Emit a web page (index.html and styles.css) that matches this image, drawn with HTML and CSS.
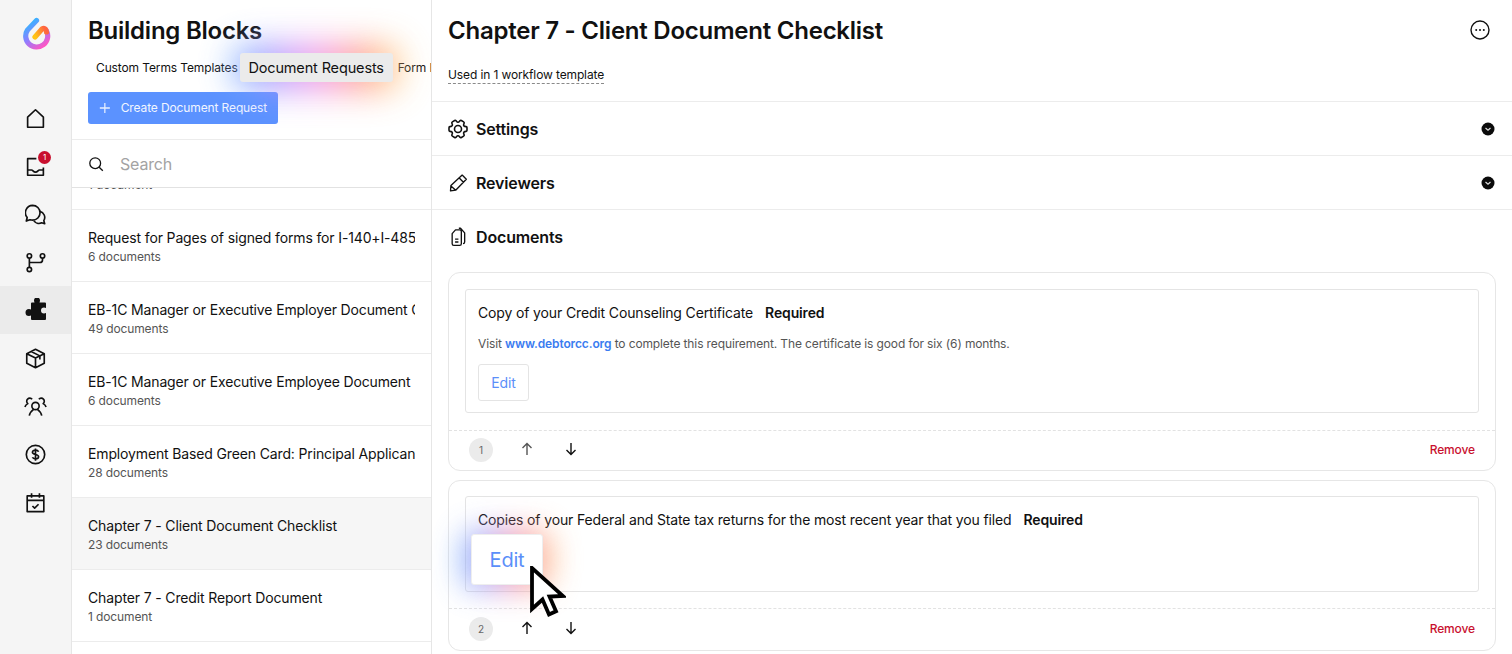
FILE: index.html
```html
<!DOCTYPE html>
<html>
  <head>
    <title>Building Blocks</title>
    <link rel="stylesheet" href="styles.css">
  </head>
  <body>
    <div class="app">

      <div class="rail">
        <div class="logo">
          <svg width="30" height="34" viewBox="0 0 30 34" fill="none">
            <defs>
              <linearGradient id="logoRing" x1="0.2" y1="0" x2="0.8" y2="1">
                <stop offset="0" stop-color="#2fb8ff"/>
                <stop offset="0.5" stop-color="#8f7dff"/>
                <stop offset="1" stop-color="#ff55c4"/>
              </linearGradient>
              <linearGradient id="logoHook" x1="0" y1="0.8" x2="1" y2="0.4">
                <stop offset="0" stop-color="#ffc414"/>
                <stop offset="1" stop-color="#ff6440"/>
              </linearGradient>
            </defs>
            <path d="M15.5 4.500 L6.500 14 A11 11 0 1 0 25.500 15" stroke="url(#logoRing)" stroke-width="5.200" stroke-linecap="round"/>
            <path d="M14 21 L21 13 C24 11 25.500 14 25.500 16" stroke="url(#logoHook)" stroke-width="5.200" stroke-linecap="round" stroke-linejoin="round"/>
          </svg>
        </div>
        <a class="rail-item" href="#home">
          <svg class="icon" viewBox="0 0 24 24"><path d="M3 10.500 12 2l9 8.500V22H3z"/></svg>
        </a>
        <a class="rail-item" href="#inbox">
          <svg class="icon" viewBox="0 0 24 24"><path d="M13 3H3v19h18v-9M3 16h4.500c1.500 0 2 2.500 4.500 2.500s3-2.500 4.500-2.500H21"/></svg>
          <span class="badge">1</span>
        </a>
        <a class="rail-item" href="#chat">
          <svg class="icon" viewBox="0 0 24 24"><path d="M8.700 1.500a8.500 8.500 0 0 1 0 17c-1 0-2-.2-3-.5L1.500 19.500l1-4A8.500 8.500 0 0 1 8.700 1.500z"/><path d="M17 8.500a7 7 0 0 1 4.500 10.500l1 3.500-3.500-1a7 7 0 0 1-9-2.500"/></svg>
        </a>
        <a class="rail-item" href="#flow">
          <svg class="icon" viewBox="0 0 24 24"><circle cx="5" cy="4.500" r="2.500"/><circle cx="5" cy="20" r="2.500"/><circle cx="20" cy="4.500" r="2.500"/><path d="M5 7v10.500M20 7v2a3 3 0 0 1-3 3H5"/></svg>
        </a>
        <a class="rail-item active" href="#blocks">
          <svg class="icon solid" viewBox="0 0 24 24"><path d="M10 2.500a3 3 0 0 1 6 0c0 .8-.3 1.300-.5 2H21a1 1 0 0 1 1 1v4.500c-.7-.3-1.200-.5-2-.5a3 3 0 0 0 0 6c.8 0 1.300-.2 2-.5V21a1 1 0 0 1-1 1H8a1 1 0 0 1-1-1v-3.500c-.7.300-1.200.5-2 .5a3.500 3.500 0 0 1 0-7c.8 0 1.300.2 2 .5V5.500a1 1 0 0 1 1-1h2.500c-.2-.7-.5-1.200-.5-2z"/></svg>
        </a>
        <a class="rail-item" href="#package">
          <svg class="icon" viewBox="0 0 24 24"><path d="M12 1.500 22 6.500v11L12 22.500 2 17.500v-11zM2 6.500 12 11.500l10-5M12 11.500v11M7 4 17 9v4"/></svg>
        </a>
        <a class="rail-item" href="#people">
          <svg class="icon wide" viewBox="0 0 24 24"><circle cx="12" cy="11.500" r="3.800"/><path d="M5.500 21.500c.5-3 2.500-5 4.500-6.500M18.500 21.500c-.5-3-2.500-5-4.500-6.500M8.500 4.500a3.200 3.200 0 1 0-4.500 4.500c-1.500.7-2.700 2-3 3.500M15.500 4.500a3.200 3.200 0 1 1 4.500 4.500c1.500.7 2.700 2 3 3.500"/></svg>
        </a>
        <a class="rail-item" href="#billing">
          <svg class="icon" viewBox="0 0 24 24"><circle cx="12" cy="12" r="10.500"/><path d="M15.500 8.800c-.5-1.200-1.800-1.800-3.500-1.800-2 0-3.500 1-3.500 2.500 0 3.500 7 1.500 7 5 0 1.500-1.500 2.500-3.500 2.500-1.700 0-3-.6-3.500-1.800M12 5v14"/></svg>
        </a>
        <a class="rail-item" href="#calendar">
          <svg class="icon" viewBox="0 0 24 24"><path d="M2.500 4.500h19V22.500h-19zM2.500 9.500h19M7.500 1.500v5M16.500 1.500v5M8.500 16l2.500 2.500 4.500-4.500"/></svg>
        </a>
      </div>

      <div class="list-panel">
        <h1 class="panel-title">Building Blocks</h1>
        <div class="tabs">
          <span class="tab">Custom Terms Templates</span>
          <span class="tab tab-hover"><span class="glow"></span><span class="tab-label">Document Requests</span></span>
          <span class="tab">Form Builder</span>
        </div>
        <button type="button" class="btn-create">
          <svg width="14" height="14" viewBox="0 0 14 14"><path d="M7 1v12M1 7h12" stroke="#fff" stroke-opacity=".85" stroke-width="1.500"/></svg>
          <span>Create Document Request</span>
        </button>
        <div class="search">
          <svg width="16" height="16" viewBox="0 0 16 16" fill="none" stroke="#111" stroke-width="1.300"><circle cx="7.200" cy="7.200" r="5.400"/><path d="M11.200 11.200l3.600 3.600"/></svg>
          <span>Search</span>
        </div>
        <div class="doc-list">
          <div class="doc-item first"><div class="doc-name">Chapter 13 Documents</div><div class="doc-count">1 document</div></div>
          <div class="doc-item"><div class="doc-name">Request for Pages of signed forms for I-140+I-485</div><div class="doc-count">6 documents</div></div>
          <div class="doc-item"><div class="doc-name">EB-1C Manager or Executive Employer Document Checklist</div><div class="doc-count">49 documents</div></div>
          <div class="doc-item"><div class="doc-name">EB-1C Manager or Executive Employee Document</div><div class="doc-count">6 documents</div></div>
          <div class="doc-item"><div class="doc-name">Employment Based Green Card: Principal Applicant</div><div class="doc-count">28 documents</div></div>
          <div class="doc-item selected"><div class="doc-name">Chapter 7 - Client Document Checklist</div><div class="doc-count">23 documents</div></div>
          <div class="doc-item"><div class="doc-name">Chapter 7 - Credit Report Document</div><div class="doc-count">1 document</div></div>
        </div>
      </div>

      <div class="main">
        <div class="main-head">
          <div class="main-title-row">
            <h2 class="main-title">Chapter 7 - Client Document Checklist</h2>
            <svg width="20" height="20" viewBox="0 0 20 20" fill="none"><circle cx="10" cy="10" r="9" stroke="#111" stroke-width="1.400"/><circle cx="6.200" cy="10" r="1" fill="#111"/><circle cx="10" cy="10" r="1" fill="#111"/><circle cx="13.800" cy="10" r="1" fill="#111"/></svg>
          </div>
          <span class="used-in">Used in 1 workflow template</span>
        </div>

        <div class="section">
          <svg class="sec-icon" viewBox="2 2 20 20"><circle cx="12" cy="12" r="3.500"/><path transform="rotate(90 12 12)" d="M9.594 3.940c.09-.542.56-.94 1.110-.94h2.593c.55 0 1.020.398 1.110.94l.213 1.281c.063.374.313.686.645.870.074.040.147.083.220.127.325.196.720.257 1.075.124l1.217-.456a1.125 1.125 0 0 1 1.370.490l1.296 2.247a1.125 1.125 0 0 1-.260 1.431l-1.003.827c-.293.241-.438.613-.430.992a7.723 7.723 0 0 1 0 .255c-.008.378.137.750.430.991l1.004.827c.424.350.534.955.260 1.430l-1.298 2.247a1.125 1.125 0 0 1-1.369.491l-1.217-.456c-.355-.133-.750-.072-1.076.124a6.470 6.470 0 0 1-.220.128c-.331.183-.581.495-.644.869l-.213 1.281c-.090.543-.560.940-1.110.940h-2.594c-.550 0-1.019-.398-1.110-.940l-.213-1.281c-.062-.374-.312-.686-.644-.870a6.520 6.520 0 0 1-.220-.127c-.325-.196-.720-.257-1.076-.124l-1.217.456a1.125 1.125 0 0 1-1.369-.490l-1.297-2.247a1.125 1.125 0 0 1 .260-1.431l1.004-.827c.292-.240.437-.613.430-.991a6.932 6.932 0 0 1 0-.255c.007-.380-.138-.751-.430-.992l-1.004-.827a1.125 1.125 0 0 1-.260-1.430l1.297-2.247a1.125 1.125 0 0 1 1.370-.491l1.216.456c.356.133.751.072 1.076-.124.072-.044.146-.086.220-.128.332-.183.582-.495.644-.869l.214-1.280z"/></svg>
          <span class="sec-title">Settings</span>
          <svg class="chev" width="14" height="14" viewBox="0 0 14 14"><circle cx="7" cy="7" r="6.500" fill="#0b0b0b"/><path d="M4.500 6l2.500 2.300L9.500 6" fill="none" stroke="#ddd" stroke-width="1.200"/></svg>
        </div>
        <div class="section">
          <svg class="sec-icon" viewBox="0 0 24 24"><path d="M17 2.500l5 5L9.500 20.500 3 21.500l.5-6.500zM13.500 6l5 5M3.500 15.500l5.500 5"/></svg>
          <span class="sec-title">Reviewers</span>
          <svg class="chev" width="14" height="14" viewBox="0 0 14 14"><circle cx="7" cy="7" r="6.500" fill="#0b0b0b"/><path d="M4.500 6l2.500 2.300L9.500 6" fill="none" stroke="#ddd" stroke-width="1.200"/></svg>
        </div>
        <div class="section section-open">
          <svg class="sec-icon" viewBox="0 0 24 24"><path d="M5 8 9 3.500h5a2 2 0 0 1 2 2V20a2 2 0 0 1-2 2H7a2 2 0 0 1-2-2zM13 1.500h2L20 7v11a2 2 0 0 1-2 2M8.500 14.500h4M8.500 18h4"/></svg>
          <span class="sec-title">Documents</span>
        </div>

        <div class="card">
          <div class="card-body">
            <div class="req-line"><span>Copy of your Credit Counseling Certificate</span><b>Required</b></div>
            <p class="req-note">Visit <a href="#debtorcc">www.debtorcc.org</a> to complete this requirement. The certificate is good for six (6) months.</p>
            <button type="button" class="btn-edit">Edit</button>
          </div>
          <div class="card-foot">
            <span class="num">1</span>
            <svg class="arrow muted" viewBox="0 0 14 14"><path d="M7 13V1.500M2.500 6 7 1.500 11.500 6"/></svg>
            <svg class="arrow" viewBox="0 0 14 14"><path d="M7 1v11.500M2.500 8 7 12.500 11.500 8"/></svg>
            <a class="remove" href="#remove">Remove</a>
          </div>
        </div>

        <div class="card card-second">
          <div class="card-body short">
            <div class="req-line"><span>Copies of your Federal and State tax returns for the most recent year that you filed</span><b>Required</b></div>
            <span class="edit-hover"><span class="glow glow-edit"></span><span class="edit-label">Edit</span></span>
            <svg class="cursor" width="36" height="52" viewBox="0 0 36 52"><path d="M2 2v41l10.500-9.500 6.500 15 7-3.200-6.500-14.800 13.500-.5z" fill="#fff" stroke="#000" stroke-width="3.800" stroke-linejoin="miter"/></svg>
          </div>
          <div class="card-foot">
            <span class="num">2</span>
            <svg class="arrow" viewBox="0 0 14 14"><path d="M7 13V1.500M2.500 6 7 1.500 11.500 6"/></svg>
            <svg class="arrow" viewBox="0 0 14 14"><path d="M7 1v11.500M2.500 8 7 12.500 11.500 8"/></svg>
            <a class="remove" href="#remove">Remove</a>
          </div>
        </div>
      </div>

    </div>
  </body>
</html>
```

FILE: styles.css
```css
* { box-sizing: border-box; letter-spacing: -0.01em; }
html, body { margin: 0; height: 654px; overflow: hidden; background: #fff; }
body { font-family: Inter, "Noto Sans", sans-serif; color: #111; }
a { text-decoration: none; }

.app { display: flex; height: 654px; }

/* left rail */
.rail { width: 72px; flex: none; background: #f5f5f5; border-right: 1px solid #e6e6e6; }
.logo { height: 94px; display: flex; justify-content: center; padding-top: 16px; }
.rail-item { display: flex; height: 48px; align-items: center; justify-content: center; position: relative; }
.rail-item.active { background: #ebebeb; }
.icon { width: 21px; height: 21px; fill: none; stroke: #111; stroke-width: 1.900; stroke-linejoin: round; }
.icon.wide { width: 23px; height: 23px; stroke-width: 1.700; }
.icon.solid { width: 24px; height: 24px; fill: #111; stroke: none; }
.badge {
  position: absolute;
  top: 9px;
  left: 38px;
  width: 13px;
  height: 13px;
  border-radius: 50%;
  background: #c8102e;
  color: #fff;
  font-size: 8px;
  line-height: 13px;
  text-align: center;
}

/* list panel */
.list-panel { width: 360px; flex: none; border-right: 1px solid #e6e6e6; overflow: hidden; display: flex; flex-direction: column; }
.panel-title { margin: 0; padding: 16px 16px 0; font-size: 24px; line-height: 30px; font-weight: 600; }
.tabs { display: flex; align-items: center; height: 29px; margin-top: 7px; padding-left: 24px; white-space: nowrap; font-size: 12px; }
.tab { flex: none; }
.tab-hover {
  position: relative;
  width: 153px;
  height: 29px;
  margin: 0 5px 0 2px;
}
.tab-label {
  position: relative;
  display: block;
  height: 29px;
  line-height: 29px;
  text-align: center;
  font-size: 14.500px;
  background: #ebebeb;
  border-radius: 3px;
}
.glow {
  position: absolute;
  inset: -8px -6px;
  border-radius: 14px;
  background: linear-gradient(90deg, #62adff 0%, #b08cff 28%, #f488e6 52%, #ff8f80 76%, #ffd070 100%);
  filter: blur(17px);
  opacity: .85;
}
.btn-create {
  align-self: flex-start;
  display: flex;
  align-items: center;
  gap: 10px;
  width: 190px;
  height: 32px;
  margin: 10px 0 0 16px;
  padding: 0 11px 1px;
  border: none;
  border-radius: 3px;
  background: #5b92ff;
  color: #f2f6ff;
  font-family: inherit;
  font-size: 12px;
  white-space: nowrap;
}
.search {
  display: flex;
  align-items: center;
  gap: 16px;
  height: 49px;
  margin-top: 15px;
  padding: 0 16px;
  border-top: 1px solid #ececec;
  border-bottom: 1px solid #e2e2e2;
  color: #a3a3a3;
  font-size: 16px;
  flex: none;
}
.doc-list { flex: 1; overflow: hidden; }
.doc-item { height: 72px; padding: 18px 16px 0; border-bottom: 1px solid #ececec; }
.doc-item.first { margin-top: -50px; }
.doc-item.selected { background: #f6f6f6; }
.doc-name { font-size: 14px; line-height: 20px; white-space: nowrap; overflow: hidden; }
.doc-count { font-size: 12px; line-height: 18px; color: #555; }

/* main */
.main { flex: 1; min-width: 0; }
.main-head { height: 102px; padding: 16px 22px 0 16px; border-bottom: 1px solid #ececec; }
.main-title-row { display: flex; align-items: center; justify-content: space-between; height: 28px; }
.main-title { margin: 0; font-size: 24px; font-weight: 600; }
.used-in { display: inline-block; margin-top: 22px; font-size: 12px; line-height: 17px; border-bottom: 1px dashed #8a8a8a; }
.section { display: flex; align-items: center; height: 54px; padding: 0 16px; border-bottom: 1px solid #ececec; }
.section-open { border-bottom: none; }
.sec-icon { width: 20px; height: 20px; margin-right: 8px; fill: none; stroke: #111; stroke-width: 1.600; stroke-linejoin: round; }
.sec-title { font-size: 16px; font-weight: 600; flex: 1; }
.chev { margin-right: 1px; }

.card { margin: 8px 16px 0; height: 199px; border: 1px solid #e6e6e6; border-radius: 12px; display: flex; flex-direction: column; }
.card-second { margin-top: 9px; height: 171px; }
.card-body { flex: none; margin: 16px 16px 0; height: 124px; border: 1px solid #e4e4e4; border-radius: 3px; padding: 14px 12px 0; position: relative; }
.card-body.short { height: 96px; margin-top: 15px; }
.req-line { display: flex; gap: 12px; font-size: 14px; line-height: 18px; }
.req-line b { font-weight: 600; }
.req-note { margin: 14px 0 0; font-size: 12px; line-height: 16px; color: #555; }
.req-note a { color: #3b7cf0; font-weight: 600; }
.btn-edit { display: block; width: 51px; height: 37px; margin-top: 12px; border: 1px solid #e4e4e4; border-radius: 3px; background: #fff; color: #5b8ff9; font-family: inherit; font-size: 14px; }

.edit-hover { position: absolute; left: 5px; top: 37px; width: 72px; height: 51px; }
.glow-edit {
  inset: -4px -8px;
  background: linear-gradient(90deg, #62adff 0%, #b79bf5 30%, #f78aa8 62%, #ffbf75 100%);
  filter: blur(15px);
}
.edit-label {
  position: relative;
  display: block;
  height: 51px;
  line-height: 50px;
  text-align: center;
  font-size: 20px;
  color: #5b8ff9;
  background: #fff;
  border: 1px solid #eee;
  border-radius: 3px;
}
.cursor { position: absolute; left: 64px; top: 69px; z-index: 2; }

.card-foot { display: flex; align-items: flex-start; flex: 1; margin-top: 17px; padding: 7px 20px 0; border-top: 1px dashed #e2e2e2; }
.short + .card-foot { margin-top: 16px; padding-top: 8px; }
.num { width: 24px; height: 24px; border-radius: 50%; background: #ebebeb; color: #666; font-size: 10px; line-height: 24px; text-align: center; }
.arrow { width: 14px; height: 14px; margin: 4px 0 0 27px; fill: none; stroke: #111; stroke-width: 1.400; }
.arrow.muted { stroke: #555; }
.arrow + .arrow { margin-left: 30px; }
.remove { margin-left: auto; color: #c8102e; font-size: 12px; line-height: 24px; font-weight: 500; }
```
